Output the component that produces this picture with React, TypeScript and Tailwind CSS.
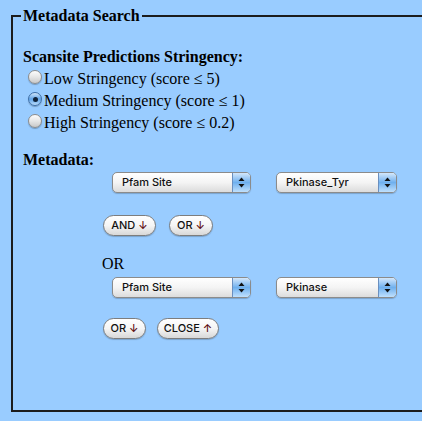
import React from "react";

const serif = { fontFamily: '"Liberation Serif", "Times New Roman", serif' };
const ui = { fontFamily: 'Inter, "Liberation Sans", Arial, sans-serif' };

function Radio({ checked }: { checked?: boolean }) {
  return checked ? (
    <span className="relative flex h-[14px] w-[14px] items-center justify-center rounded-full border border-[#3d6fa8] bg-gradient-to-b from-[#cfe6fb] via-[#5ea3e8] to-[#b9dcfb] shadow-[0_1px_1px_rgba(0,0,0,0.25)]">
      <span className="h-[5px] w-[5px] rounded-full bg-[#10233a]" />
    </span>
  ) : (
    <span className="h-[14px] w-[14px] rounded-full border border-[#8d8d8d] bg-gradient-to-b from-[#fdfdfd] via-[#e6e6e6] to-[#c9c9c9] shadow-[0_1px_1px_rgba(0,0,0,0.25)]" />
  );
}

function Select({ label, width }: { label: string; width: string }) {
  return (
    <div
      className={`flex h-[21px] ${width} overflow-hidden rounded-[5px] border border-[#8b8b8b] bg-gradient-to-b from-white via-[#f4f4f4] to-[#dcdcdc] shadow-[0_1px_1px_rgba(0,0,0,0.2)]`}
      style={ui}
    >
      <span className="flex flex-1 items-center pl-[9px] text-[11px] font-medium text-[#111]">{label}</span>
      <span className="flex w-[18px] items-center justify-center border-l border-[#6a8fbf] bg-gradient-to-b from-[#d3e7fb] via-[#6fb0ee] to-[#bfe0fd]">
        <svg width="7" height="11" viewBox="0 0 7 11">
          <path d="M3.5 0.5 L6.5 4 L0.5 4 Z" fill="#111" />
          <path d="M3.5 10.5 L6.5 7 L0.5 7 Z" fill="#111" />
        </svg>
      </span>
    </div>
  );
}

function Pill({ label, arrow, width }: { label: string; arrow: string; width: string }) {
  return (
    <button
      className={`flex h-[21px] ${width} items-center justify-center gap-[3px] rounded-full border border-[#7d7d7d] bg-gradient-to-b from-white via-[#f5f5f5] to-[#d8d8d8] text-[11px] font-medium text-[#111] shadow-[0_1px_1px_rgba(0,0,0,0.2)]`}
      style={ui}
    >
      <span>{label}</span>
      <span className="text-[#5c0a0e]">{arrow}</span>
    </button>
  );
}

export default function App() {
  const options = [
    { label: "Low Stringency (score ≤ 5)", checked: false },
    { label: "Medium Stringency (score ≤ 1)", checked: true },
    { label: "High Stringency (score ≤ 0.2)", checked: false },
  ];

  return (
    <div className="h-[421px] w-[422px] overflow-hidden bg-[#99ccff] pt-[7px]" style={serif}>
      <fieldset className="ml-[11px] h-[405px] w-[440px] border-2 border-[#1c1c1c] px-[8px] text-black">
        <legend className="px-[2px] text-[16px] font-bold leading-[18px]">Metadata Search</legend>

        <div className="mt-[23px] pl-[2px] text-[16px] font-bold leading-[18px]">Scansite Predictions Stringency:</div>
        <div className="flex flex-col">
          {options.map((o) => (
            <label key={o.label} className="ml-[7px] flex h-[22px] items-center gap-[2px] text-[16px]">
              <Radio checked={o.checked} />
              <span className="mt-[3px]">{o.label}</span>
            </label>
          ))}
        </div>

        <div className="mt-[19px] pl-[2px] text-[16px] font-bold leading-[18px]">Metadata:</div>

        <div className="ml-[91px] mt-[3px] flex gap-[25px]">
          <Select label="Pfam Site" width="w-[139px]" />
          <Select label="Pkinase_Tyr" width="w-[121px]" />
        </div>

        <div className="ml-[82px] mt-[22px] flex gap-[13px]">
          <Pill label="AND" arrow="↓" width="w-[53px]" />
          <Pill label="OR" arrow="↓" width="w-[44px]" />
        </div>

        <div className="ml-[81px] mt-[19px] text-[16px] leading-[18px]">OR</div>

        <div className="ml-[91px] mt-[4px] flex gap-[25px]">
          <Select label="Pfam Site" width="w-[139px]" />
          <Select label="Pkinase" width="w-[121px]" />
        </div>

        <div className="ml-[82px] mt-[20px] flex gap-[11px]">
          <Pill label="OR" arrow="↓" width="w-[43px]" />
          <Pill label="CLOSE" arrow="↑" width="w-[62px]" />
        </div>
      </fieldset>
    </div>
  );
}
